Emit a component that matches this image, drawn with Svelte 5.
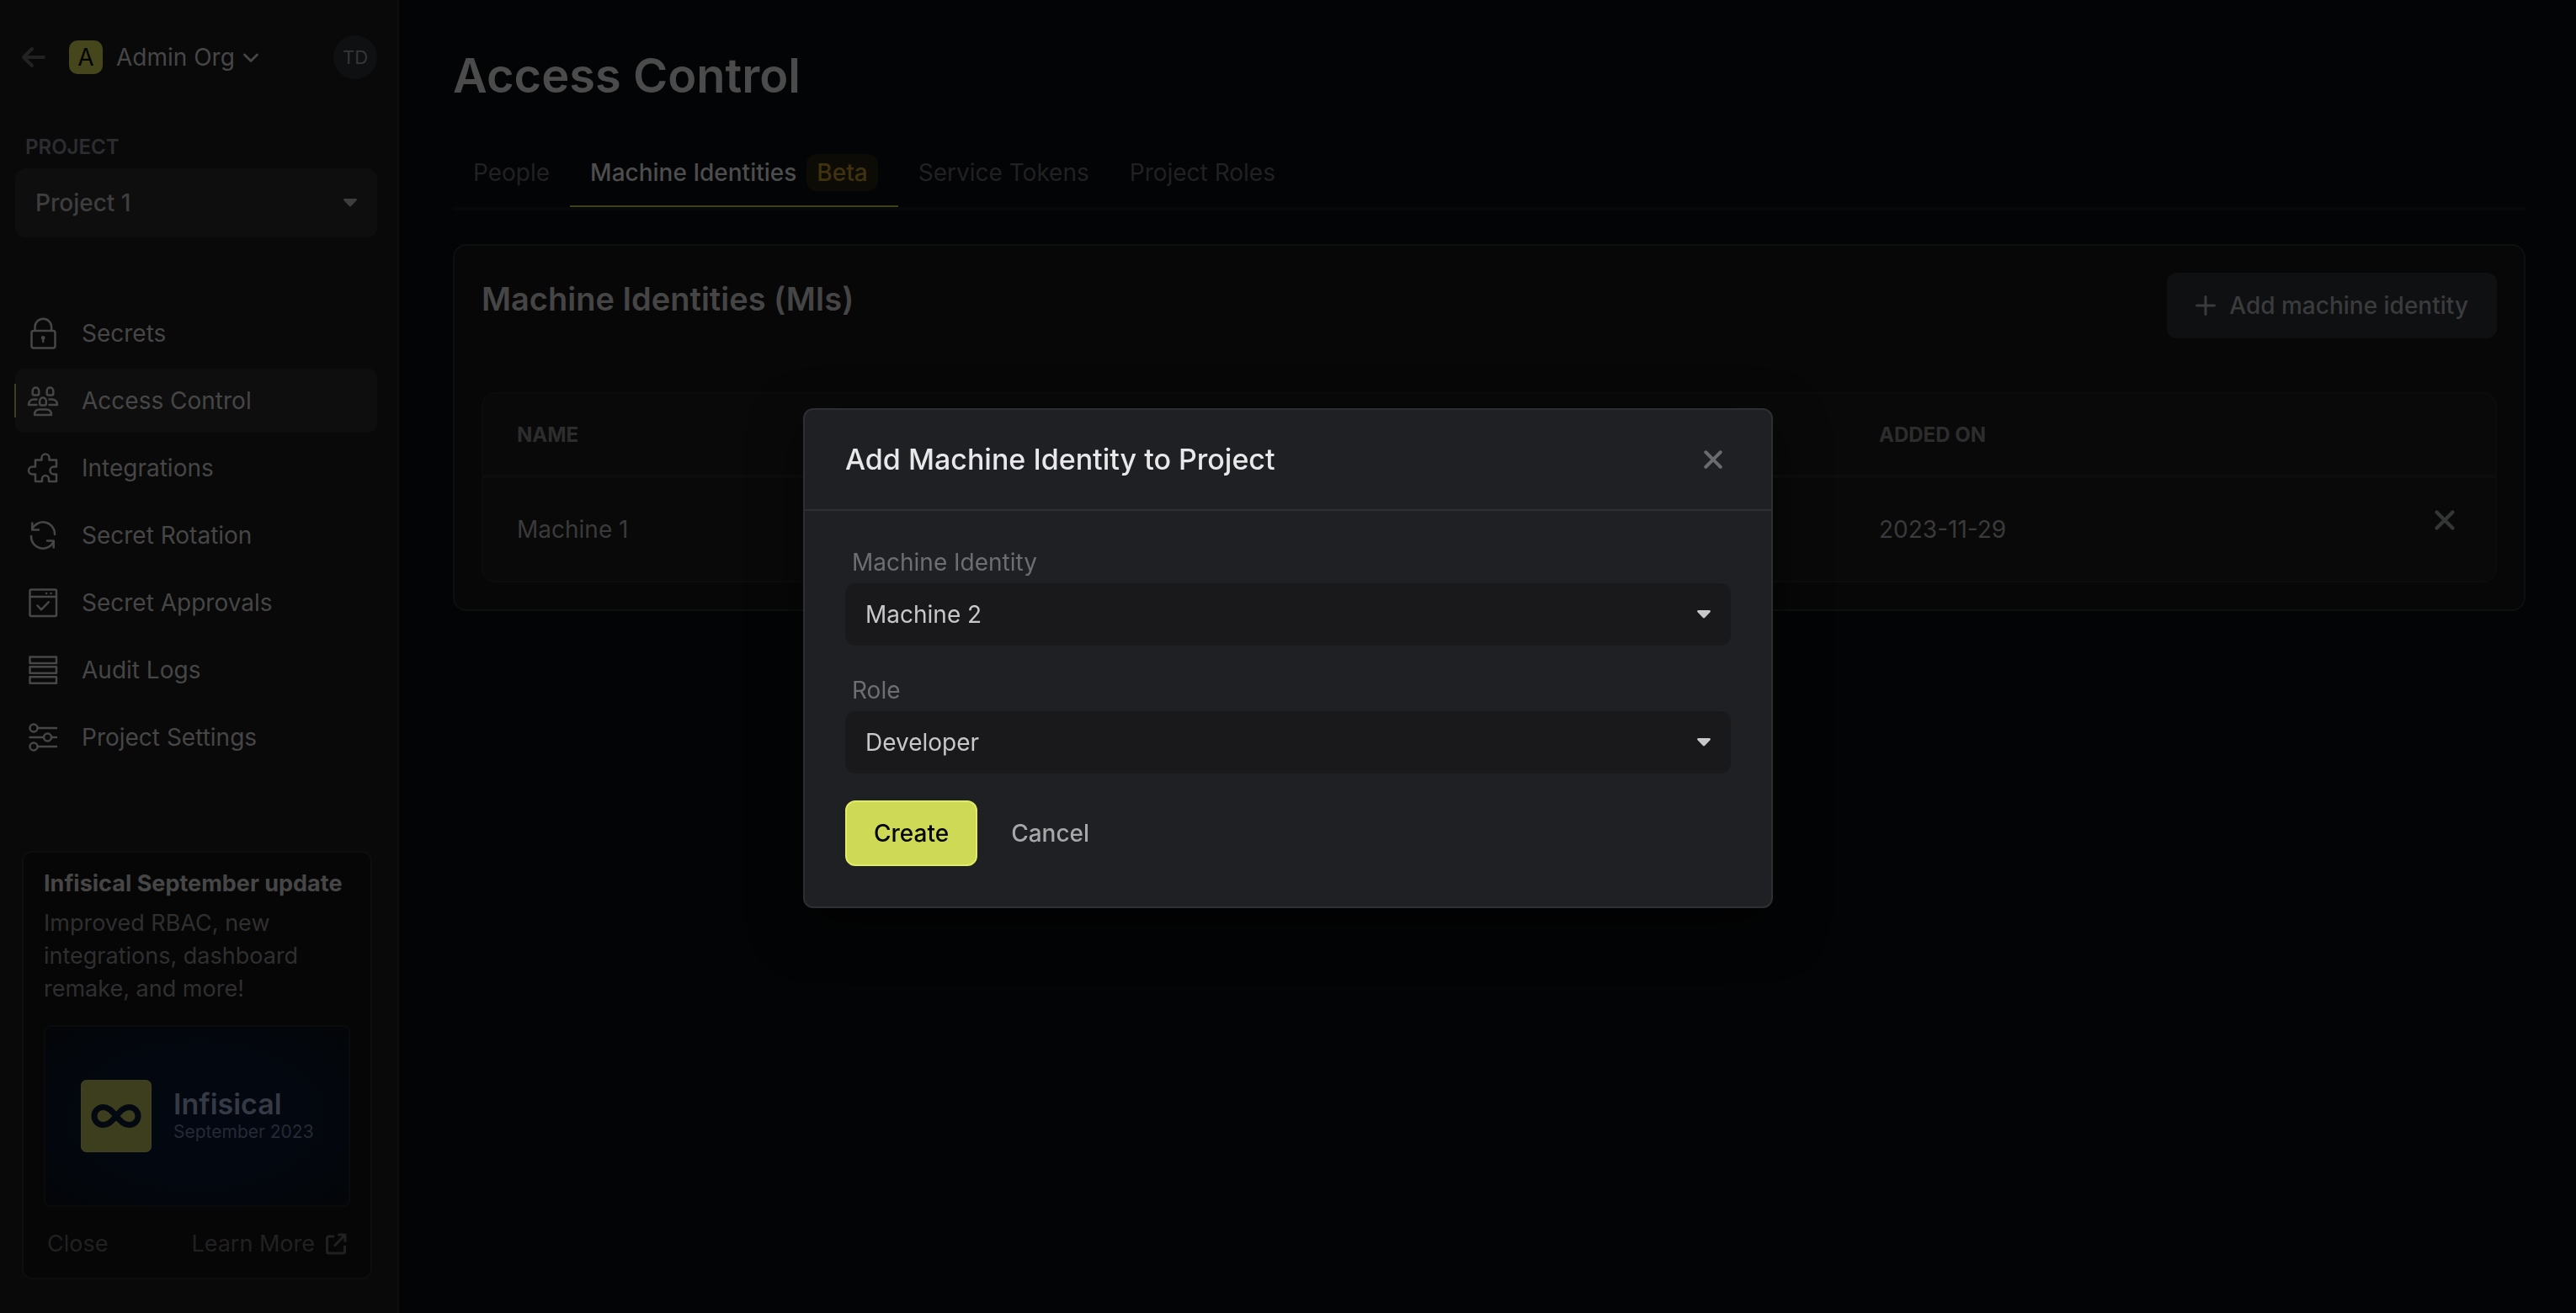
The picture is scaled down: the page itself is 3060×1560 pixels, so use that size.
<script lang="ts">
  const nav = [
    { label: 'Secrets', icon: 'lock' },
    { label: 'Access Control', icon: 'users', active: true },
    { label: 'Integrations', icon: 'puzzle' },
    { label: 'Secret Rotation', icon: 'rotate' },
    { label: 'Secret Approvals', icon: 'check' },
    { label: 'Audit Logs', icon: 'rows' },
    { label: 'Project Settings', icon: 'sliders' }
  ];

  const tabs = [
    { label: 'People' },
    { label: 'Machine Identities', badge: 'Beta', active: true },
    { label: 'Service Tokens' },
    { label: 'Project Roles' }
  ];

  const rows = [{ name: 'Machine 1', added: '2023-11-29' }];
</script>

{#snippet cross(size: number)}
  <svg width={size} height={size} viewBox="0 0 24 24" fill="none" stroke="currentColor" stroke-width="4.4" stroke-linecap="round" aria-hidden="true">
    <path d="M2.500 2.500l19 19M21.500 2.500l-19 19" />
  </svg>
{/snippet}

{#snippet caret()}
  <svg class="caret" width="16" height="10" viewBox="0 0 16 10" fill="currentColor" aria-hidden="true">
    <path d="M1.500 0h13c1.300 0 1.900 1.400 1 2.300L9 9c-.6.6-1.400.6-2 0L.5 2.300C-.4 1.400.2 0 1.500 0z" />
  </svg>
{/snippet}

<div class="app">
  <aside class="sidebar">
    <header class="org">
      <a class="back" href="#back" aria-label="Back">
        <svg width="28" height="24" viewBox="0 0 28 24" fill="none" stroke="currentColor" stroke-width="4" stroke-linecap="round" stroke-linejoin="round" aria-hidden="true">
          <path d="M12 2L2 12l10 10M2.500 12H26" />
        </svg>
      </a>
      <button class="org-switch" type="button">
        <span class="org-badge">A</span>
        <span class="org-name">Admin Org</span>
        <svg width="18" height="12" viewBox="0 0 18 12" fill="none" stroke="currentColor" stroke-width="2.800" stroke-linecap="round" stroke-linejoin="round" aria-hidden="true">
          <path d="M1.500 3L9 10.500 16.500 3" />
        </svg>
      </button>
      <button class="avatar" type="button">TD</button>
    </header>

    <label class="project-label" for="project">PROJECT</label>
    <div class="pick project">
      <select id="project"><option>Project 1</option></select>
      {@render caret()}
    </div>

    <nav class="nav">
      {#each nav as item}
        <a href="#{item.icon}" class:active={item.active}>
          <svg width="36" height="36" viewBox="0 0 36 36" fill="none" stroke="currentColor" stroke-width="2.500" stroke-linecap="round" stroke-linejoin="round" aria-hidden="true">
            {#if item.icon === 'lock'}
              <rect x="4.500" y="15" width="28" height="20.500" rx="2.500" />
              <path d="M8.500 15v-4.500a9.800 9.800 0 0 1 19.600 0V15M18.200 24v4" />
              <circle cx="18.200" cy="23.500" r="1.200" fill="currentColor" />
            {:else if item.icon === 'users'}
              <path d="M5.700 6.300a3.800 3.800 0 0 1 7.600 0v3.200c0 1.200-.8 2-2 2H7.700c-1.200 0-2-.8-2-2z" />
              <path d="M22.700 6.300a3.800 3.800 0 0 1 7.600 0v3.200c0 1.200-.8 2-2 2h-3.600c-1.200 0-2-.8-2-2z" />
              <path d="M14.200 18.300a3.800 3.800 0 0 1 7.600 0v3.200c0 1.200-.8 2-2 2h-3.600c-1.200 0-2-.8-2-2z" />
              <path d="M10.500 16.500H7.500C3.800 16.500 1 19 1 23h9.500M25.500 16.500h3c3.700 0 6.500 2.500 6.500 6.500h-9.500" />
              <path d="M8 35c0-4.500 2.600-6.500 6-6.500h8c3.400 0 6 2 6 6.500z" />
            {:else if item.icon === 'puzzle'}
              <path d="M9 8.500h7.500v-2.500a4.500 4.500 0 0 1 9 0v2.500h8.500v8h-3a4.500 4.500 0 0 0 0 9h3v8.500h-9v-3a4 4 0 0 0-8 0v3H9v-8.500H5.500a4.500 4.500 0 0 1 0-9H9z" />
            {:else if item.icon === 'rotate'}
              <path d="M5.300 10.500A14 14 0 0 1 32 17M30.700 25.500A14 14 0 0 1 4 19" />
              <path d="M5.300 3.500v8H13M30.700 32.500v-8H23" />
            {:else if item.icon === 'check'}
              <rect x="2.500" y="2.500" width="31.500" height="31.500" rx="1.500" />
              <path d="M2.500 11H34M11.500 21.500l4.500 4.800 8.700-9" />
              <path d="M22 7h.1M27.500 7h.1" />
            {:else if item.icon === 'rows'}
              <rect x="2.500" y="2.500" width="31.500" height="7.500" />
              <rect x="2.500" y="14.200" width="31.500" height="7.500" />
              <rect x="2.500" y="26.200" width="31.500" height="7.500" />
            {:else}
              <circle cx="7" cy="7" r="4.500" />
              <circle cx="23.500" cy="18" r="4.500" />
              <circle cx="7" cy="29" r="4.500" />
              <path d="M11.500 7H34M2.500 18H19M28 18h6M11.500 29H34" />
            {/if}
          </svg>
          <span>{item.label}</span>
        </a>
      {/each}
    </nav>

    <section class="promo">
      <h2>Infisical September update</h2>
      <p>Improved RBAC, new integrations, dashboard remake, and more!</p>
      <div class="banner">
        <svg width="84" height="86" viewBox="0 0 84 86" aria-hidden="true">
          <rect x="0.500" y="0.500" width="83" height="85" rx="6" fill="#3c3e1e" stroke="#3f4324" />
          <path d="M42 43C36 36 32.500 32.500 26.500 32.500a10.500 10.500 0 0 0 0 21C32.500 53.500 36 50 42 43S51.500 32.500 57.500 32.500a10.500 10.500 0 0 1 0 21C51.500 53.500 48 50 42 43z" fill="none" stroke="#040811" stroke-width="7" stroke-linejoin="round" />
        </svg>
        <div class="banner-text">
          <strong>Infisical</strong>
          <span>September 2023</span>
        </div>
      </div>
      <div class="promo-actions">
        <button type="button">Close</button>
        <a href="#learn">Learn More
          <svg width="26" height="26" viewBox="0 0 26 26" fill="none" stroke="currentColor" stroke-width="3" stroke-linecap="round" stroke-linejoin="round" aria-hidden="true">
            <path d="M10 4H4.500A2 2 0 0 0 2.500 6v16a2 2 0 0 0 2 2h17a2 2 0 0 0 2-2v-6M16.500 2H24v7.500M24 2L12 14.500" />
          </svg>
        </a>
      </div>
    </section>
  </aside>

  <main class="content">
    <h1>Access Control</h1>
    <div class="tabs" role="tablist">
      {#each tabs as tab}
        <button type="button" role="tab" aria-selected={!!tab.active} class:active={tab.active}>
          {tab.label}
          {#if tab.badge}<span class="badge">{tab.badge}</span>{/if}
        </button>
      {/each}
    </div>

    <section class="card">
      <div class="card-head">
        <h2>Machine Identities (MIs)</h2>
        <button class="add" type="button">
          <svg width="24" height="24" viewBox="0 0 24 24" fill="none" stroke="currentColor" stroke-width="3" stroke-linecap="round" aria-hidden="true">
            <path d="M12 1.500v21M1.500 12h21" />
          </svg>
          Add machine identity
        </button>
      </div>
      <div class="table-box">
        <table>
          <thead>
            <tr><th class="col-name">NAME</th><th>ADDED ON</th><th class="col-act"></th></tr>
          </thead>
          <tbody>
            {#each rows as row}
              <tr>
                <td>{row.name}</td>
                <td>{row.added}</td>
                <td class="act"><button type="button" aria-label="Remove">{@render cross(24)}</button></td>
              </tr>
            {/each}
          </tbody>
        </table>
      </div>
    </section>
  </main>
</div>

<div class="overlay">
  <div class="modal" role="dialog" aria-modal="true" aria-labelledby="modal-title">
    <header>
      <h2 id="modal-title">Add Machine Identity to Project</h2>
      <button type="button" aria-label="Close">{@render cross(22)}</button>
    </header>
    <form>
      <div class="field">
        <label for="identity">Machine Identity</label>
        <div class="pick">
          <select id="identity"><option>Machine 2</option></select>
          {@render caret()}
        </div>
      </div>
      <div class="field">
        <label for="role">Role</label>
        <div class="pick">
          <select id="role"><option>Developer</option></select>
          {@render caret()}
        </div>
      </div>
      <div class="actions">
        <button class="create" type="button">Create</button>
        <button class="cancel" type="button">Cancel</button>
      </div>
    </form>
  </div>
</div>

<style>
  :global(body) {
    background: #030405;
  }

  .app,
  .overlay {
    font-family: Inter, 'Liberation Sans', sans-serif;
    font-size: 28px;
    line-height: 40px;
  }

  .app *,
  .overlay * {
    box-sizing: border-box;
  }

  button,
  select {
    margin: 0;
    padding: 0;
    border: 0;
    background: none;
    color: inherit;
    font: inherit;
  }

  h1,
  h2,
  p {
    margin: 0;
  }

  a {
    color: inherit;
    text-decoration: none;
  }

  svg {
    display: block;
    flex: none;
    overflow: visible;
  }

  .app {
    display: flex;
    min-height: 100vh;
    background: #030405;
  }

  .sidebar {
    box-sizing: border-box;
    display: flex;
    flex-direction: column;
    flex: none;
    width: 474px;
    padding: 42px 24px 40px 18px;
    border-right: 2px solid #0e0e0f;
    background: #090909;
    color: #464646;
  }

  .org {
    display: flex;
    align-items: center;
    height: 52px;
    padding-left: 8px;
  }

  .back {
    margin-right: 28px;
    color: #222;
  }

  .org-switch {
    display: flex;
    align-items: center;
  }

  .org-badge {
    width: 40px;
    height: 40px;
    margin-right: 16px;
    border-radius: 10px;
    background: #45461b;
    color: #040404;
    text-align: center;
  }

  .org-name {
    margin-right: 10px;
  }

  .avatar {
    width: 52px;
    height: 52px;
    margin-left: auto;
    border-radius: 50%;
    background: #0f1012;
    color: #363636;
    font-size: 22px;
  }

  .project-label {
    margin-top: 64px;
    padding: 0 12px;
    color: #2c2d30;
    font-size: 24px;
    font-weight: 600;
    line-height: 34px;
  }

  .pick {
    display: grid;
    align-items: center;
    height: 74px;
    border-radius: 12px;
    background: #19191b;
    color: #c8c8ca;
  }

  .pick select {
    grid-area: 1 / 1;
    width: 100%;
    height: 100%;
    padding: 0 24px;
    appearance: none;
  }

  .caret {
    grid-area: 1 / 1;
    justify-self: end;
    margin-right: 24px;
    pointer-events: none;
  }

  .project {
    height: 82px;
    margin-top: 8px;
    background: #0e0e0f;
    color: #3e3e3e;
    font-weight: 500;
  }

  .nav {
    display: flex;
    flex-direction: column;
    gap: 4px;
    margin-top: 76px;
  }

  .nav a {
    position: relative;
    display: flex;
    align-items: center;
    gap: 28px;
    height: 76px;
    padding-left: 15px;
    border-radius: 10px;
  }

  .nav .active {
    background: #0e0e0f;
  }

  .nav .active::before {
    content: '';
    position: absolute;
    left: -1px;
    top: 18px;
    bottom: 18px;
    width: 2px;
    background: #3f4017;
  }

  .promo {
    margin: auto 6px 0 8px;
    padding: 16px 24px 20px;
    border: 2px solid #0e0e0e;
    border-radius: 12px;
    background: #060606;
    font-size: 27px;
  }

  .promo h2 {
    font-size: 27px;
    font-weight: 700;
    line-height: 42px;
    white-space: nowrap;
  }

  .promo p {
    margin-top: 6px;
    color: #2f2f2f;
    line-height: 39px;
  }

  .banner {
    display: flex;
    align-items: center;
    gap: 26px;
    height: 216px;
    margin-top: 24px;
    padding: 0 0 0 42px;
    border: 2px solid #0a0b0c;
    border-radius: 8px;
    background: radial-gradient(ellipse at center, #030711 0%, #03070f 50%, #030508 100%);
  }

  .banner-text {
    display: flex;
    flex-direction: column;
    white-space: nowrap;
  }

  .banner-text strong {
    color: #363a44;
    font-size: 34px;
    font-weight: 600;
    line-height: 38px;
  }

  .banner-text span {
    color: #262a34;
    font-size: 21px;
    line-height: 28px;
  }

  .promo-actions {
    display: flex;
    justify-content: space-between;
    margin-top: 24px;
    padding: 0 4px;
    color: #212121;
  }

  .promo-actions a {
    display: flex;
    align-items: center;
    gap: 12px;
  }

  .content {
    flex: 1;
    min-width: 0;
    padding: 54px 60px 0 64px;
  }

  h1 {
    color: #4b4b4b;
    font-size: 56px;
    font-weight: 600;
    line-height: 72px;
  }

  .tabs {
    display: flex;
    margin-top: 40px;
    border-bottom: 4px solid #070808;
    color: #212122;
  }

  .tabs button {
    display: flex;
    align-items: center;
    gap: 12px;
    height: 80px;
    padding: 0 24px;
    border-bottom: 2px solid transparent;
  }

  .tabs .active {
    border-bottom-color: #3f4017;
    color: #4d4d4d;
    font-weight: 500;
  }

  .badge {
    padding: 2px 12px;
    border-radius: 12px;
    background: #0d0b06;
    color: #40320e;
  }

  .card {
    margin-top: 40px;
    padding: 32px;
    border: 2px solid #0e0f0f;
    border-radius: 16px;
    background: #070707;
  }

  .card-head {
    display: flex;
    justify-content: space-between;
    align-items: flex-start;
  }

  .card-head h2 {
    color: #454545;
    font-size: 38px;
    font-weight: 600;
    line-height: 62px;
  }

  .add {
    display: flex;
    align-items: center;
    gap: 16px;
    height: 78px;
    padding: 0 34px;
    border-radius: 12px;
    background: #0f1012;
    color: #3a3b3d;
    font-weight: 500;
  }

  .table-box {
    margin-top: 64px;
    overflow: hidden;
    border: 2px solid #0c0c0d;
    border-radius: 16px;
    background: #090909;
  }

  table {
    width: 100%;
    border-collapse: separate;
    border-spacing: 0;
    table-layout: fixed;
  }

  th,
  td {
    padding: 0 40px;
    text-align: left;
  }

  th {
    height: 100px;
    padding-top: 2px;
    border-bottom: 4px solid #0d0d0e;
    color: #2d2d2d;
    font-size: 24px;
    font-weight: 700;
  }

  td {
    height: 122px;
    color: #3a3a3b;
  }

  .col-name {
    width: 67.7%;
  }

  .col-act {
    width: 160px;
  }

  td.act {
    padding: 38px 48px 0 0;
    color: #343535;
    vertical-align: top;
  }

  .act button {
    display: block;
    margin-left: auto;
  }

  .overlay {
    position: fixed;
    inset: 0;
    display: flex;
    align-items: center;
    justify-content: center;
    padding-top: 4px;
  }

  .modal {
    width: 1152px;
    border: 2px solid #2d2f33;
    border-radius: 12px;
    background: #1e2023;
    box-shadow: 0 20px 60px rgba(0, 0, 0, 0.5);
  }

  .modal header {
    display: flex;
    align-items: center;
    justify-content: space-between;
    height: 120px;
    padding: 0 58px 0 48px;
    border-bottom: 2px solid #2d2f33;
    color: #6a6b6e;
  }

  .modal h2 {
    color: #e8e8ea;
    font-size: 34px;
    font-weight: 500;
  }

  form {
    display: flex;
    flex-direction: column;
    gap: 32px;
    padding: 40px 48px 48px;
  }

  .field label {
    display: block;
    margin-bottom: 4px;
    padding: 0 8px;
    color: #6d6e71;
    line-height: 42px;
  }

  .actions {
    display: flex;
    gap: 40px;
    font-weight: 500;
  }

  .create {
    height: 78px;
    padding: 0 32px;
    border: 2px solid #e0ed62;
    border-radius: 12px;
    background: #ced955;
    color: #050505;
  }

  .cancel {
    color: #a6a7a9;
  }
</style>
